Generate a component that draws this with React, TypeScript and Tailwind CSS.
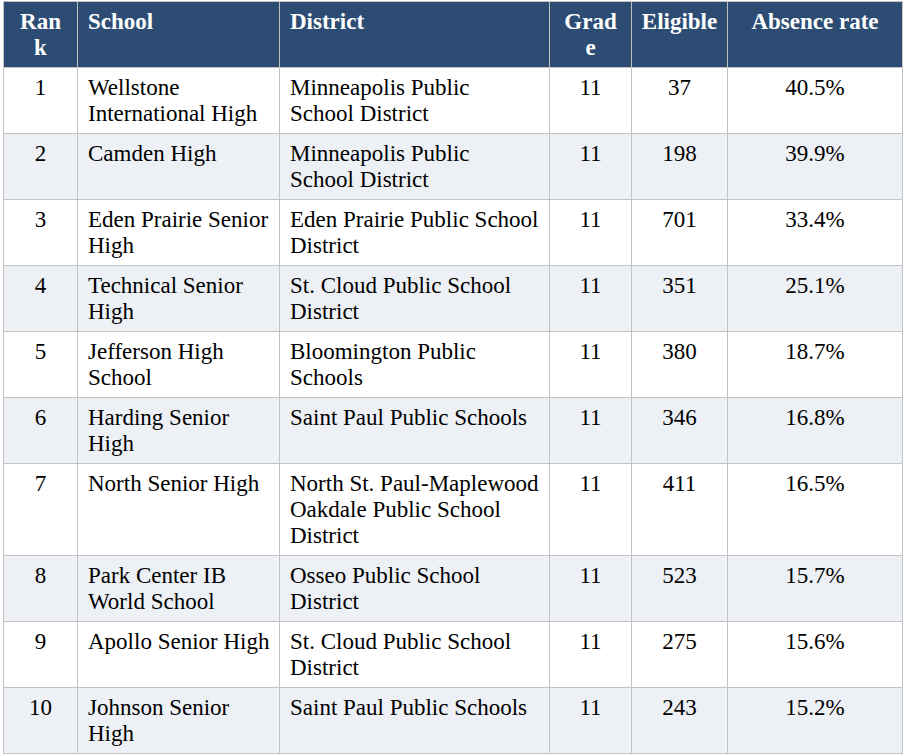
import React from 'react';

interface SchoolRow {
  rank: number;
  school: string;
  district: string;
  grade: number;
  eligible: number;
  absence: string;
}

const rows: SchoolRow[] = [
  { rank: 1, school: 'Wellstone International High', district: 'Minneapolis Public School District', grade: 11, eligible: 37, absence: '40.5%' },
  { rank: 2, school: 'Camden High', district: 'Minneapolis Public School District', grade: 11, eligible: 198, absence: '39.9%' },
  { rank: 3, school: 'Eden Prairie Senior High', district: 'Eden Prairie Public School District', grade: 11, eligible: 701, absence: '33.4%' },
  { rank: 4, school: 'Technical Senior High', district: 'St. Cloud Public School District', grade: 11, eligible: 351, absence: '25.1%' },
  { rank: 5, school: 'Jefferson High School', district: 'Bloomington Public Schools', grade: 11, eligible: 380, absence: '18.7%' },
  { rank: 6, school: 'Harding Senior High', district: 'Saint Paul Public Schools', grade: 11, eligible: 346, absence: '16.8%' },
  { rank: 7, school: 'North Senior High', district: 'North St. Paul-Maplewood Oakdale Public School District', grade: 11, eligible: 411, absence: '16.5%' },
  { rank: 8, school: 'Park Center IB World School', district: 'Osseo Public School District', grade: 11, eligible: 523, absence: '15.7%' },
  { rank: 9, school: 'Apollo Senior High', district: 'St. Cloud Public School District', grade: 11, eligible: 275, absence: '15.6%' },
  { rank: 10, school: 'Johnson Senior High', district: 'Saint Paul Public Schools', grade: 11, eligible: 243, absence: '15.2%' },
];

const th = 'border border-[#c3c3c3] pt-[7px] pb-[6px] align-top font-bold break-words';
const td = 'border border-[#c3c3c3] pt-[7px] pb-[6px] align-top break-words';

export default function App() {
  return (
    <div className="bg-white min-h-[754px] pl-[3px] pt-[1px] font-['Liberation_Serif','Times_New_Roman',serif] text-[23px] leading-[26px] text-black">
      <table className="w-[899px] table-fixed border-collapse">
        <colgroup>
          <col className="w-[74px]" />
          <col className="w-[202px]" />
          <col className="w-[270px]" />
          <col className="w-[82px]" />
          <col className="w-[96px]" />
          <col className="w-[175px]" />
        </colgroup>
        <thead>
          <tr className="bg-[#2d4c74] text-white">
            <th className={`${th} px-[10px] text-center`}>Rank</th>
            <th className={`${th} px-[10px] text-left`}>School</th>
            <th className={`${th} px-[10px] text-left`}>District</th>
            <th className={`${th} px-[10px] text-center`}>Grade</th>
            <th className={`${th} px-[2px] text-center`}>Eligible</th>
            <th className={`${th} px-[10px] text-center`}>Absence rate</th>
          </tr>
        </thead>
        <tbody>
          {rows.map((row, i) => (
            <tr key={row.rank} className={i % 2 === 1 ? 'bg-[#edf0f5]' : 'bg-white'}>
              <td className={`${td} px-[10px] text-center`}>{row.rank}</td>
              <td className={`${td} pl-[10px] pr-[4px] text-left`}>{row.school}</td>
              <td className={`${td} px-[10px] text-left`}>{row.district}</td>
              <td className={`${td} px-[10px] text-center`}>{row.grade}</td>
              <td className={`${td} px-[10px] text-center`}>{row.eligible}</td>
              <td className={`${td} px-[10px] text-center`}>{row.absence}</td>
            </tr>
          ))}
        </tbody>
      </table>
    </div>
  );
}
